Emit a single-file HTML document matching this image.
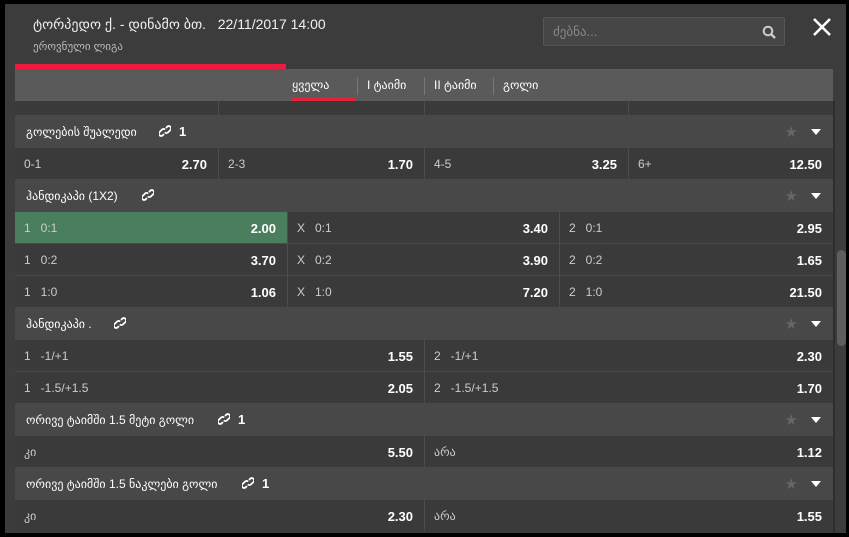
<!DOCTYPE html>
<html><head><meta charset="utf-8"><style>
*{margin:0;padding:0;box-sizing:border-box}
body{width:849px;height:537px;background:#000;overflow:hidden;font-family:"Liberation Sans","DejaVu Sans",sans-serif;color:#ddd;position:relative}
#panel{position:absolute;left:5px;top:4px;width:841px;height:529px;background:#3c3c3c;overflow:hidden}
.abs{position:absolute}
.title{left:28px;top:12px;font-size:14px;color:#f0f0f0}
.sub{left:28px;top:36px;font-size:11px;color:#bbb}
.search{left:538px;top:13px;width:242px;height:29px;border:1px solid #555;background:#464646;border-radius:2px;font-size:13px;color:#888;padding:6px 9px}
.red{left:10px;top:60px;width:271px;height:5px;background:#f0193f}
.tabs{left:10px;top:65px;width:818px;height:32px;background:#5a5a5a;font-size:12px;color:#fff}
.tab{position:absolute;top:9px}
.sep{position:absolute;top:8px;width:1px;height:18px;background:#777}
.rows{left:10px;top:97px;width:818px}
.r{position:relative;height:32px;border-top:1px solid #4b4b4b;background:#3a3a3a;font-size:12px}
.h{background:#484848;color:#fff;font-size:12px}
.h span.t{position:absolute;left:11px;top:9px}
.c{position:absolute;top:0;height:31px;border-left:1px solid #4d4d4d}
.c .l{position:absolute;left:9px;top:9px;color:#ccc}
.c .v{position:absolute;right:11px;top:9px;font-weight:bold;color:#fff;font-size:13px}
.g{background:#4a7e5e}
.star{position:absolute;right:35px;top:7px;color:#666;font-size:15px}
.tri{position:absolute;right:12px;top:13px;width:0;height:0;border-left:5px solid transparent;border-right:5px solid transparent;border-top:6px solid #fff}
.lnk{position:absolute;top:8px;font-size:13px;font-weight:bold}
.lnk svg{vertical-align:-1px;margin-right:8px}
</style></head><body>
<svg width="0" height="0" style="position:absolute"><defs><g id="ch"><path d="M5 9 L3.5 10.5 a2.3 2.3 0 0 1 -3.2 -3.2 L3 4.6 a2.3 2.3 0 0 1 3.2 0 M7 3 L8.5 1.5 a2.3 2.3 0 0 1 3.2 3.2 L9 7.4 a2.3 2.3 0 0 1 -3.2 0" stroke="#fff" stroke-width="1.8" fill="none"/></g></defs></svg>
<div id="panel">
<div class="abs title">ტორპედო ქ. - დინამო ბთ.&nbsp;&nbsp; 22/11/2017 14:00</div>
<div class="abs sub">ეროვნული ლიგა</div>
<div class="abs search">ძებნა...<svg style="position:absolute;right:8px;top:7px" width="14" height="14" viewBox="0 0 14 14"><circle cx="6" cy="6" r="4.3" stroke="#ccc" stroke-width="2" fill="none"/><path d="M9 9l4 4" stroke="#ccc" stroke-width="2.4"/></svg></div>
<svg class="abs" style="left:807px;top:13px" width="20" height="20" viewBox="0 0 20 20"><path d="M2 2L18 18M18 2L2 18" stroke="#fff" stroke-width="2.6"/></svg>
<div class="abs red"></div>
<div class="abs tabs">
<span class="tab" style="left:277px">ყველა</span>
<div class="abs" style="left:276px;top:29px;width:64px;height:3px;background:#e0243b"></div>
<div class="sep" style="left:342px"></div><span class="tab" style="left:352px">I ტაიმი</span>
<div class="sep" style="left:409px"></div><span class="tab" style="left:419px">II ტაიმი</span>
<div class="sep" style="left:478px"></div><span class="tab" style="left:488px">გოლი</span>
</div>
<div class="abs rows">
<div class="r" style="height:14px;border-top:none"><div class="c" style="left:203px;height:14px"></div><div class="c" style="left:409px;height:14px"></div><div class="c" style="left:613px;height:14px"></div></div>
<div class="r h"><span class="t">გოლების შუალედი</span><span class="lnk" style="left:144px"><svg width="12" height="12" viewBox="0 0 12 12"><use href="#ch"/></svg>1</span><span class="star">★</span><span class="tri"></span></div>
<div class="r"><div class="c" style="left:0;border:none;width:203px"><span class="l">0-1</span><span class="v">2.70</span></div><div class="c" style="left:203px;width:206px"><span class="l">2-3</span><span class="v">1.70</span></div><div class="c" style="left:409px;width:204px"><span class="l">4-5</span><span class="v">3.25</span></div><div class="c" style="left:613px;width:205px"><span class="l">6+</span><span class="v">12.50</span></div></div>
<div class="r h"><span class="t">ჰანდიკაპი (1X2)</span><span class="lnk" style="left:127px"><svg width="12" height="12" viewBox="0 0 12 12"><use href="#ch"/></svg></span><span class="star">★</span><span class="tri"></span></div>
<div class="r"><div class="c g" style="left:0;border:none;width:272px"><span class="l">1&nbsp;&nbsp; 0:1</span><span class="v">2.00</span></div><div class="c" style="left:272px;width:272px"><span class="l">X&nbsp;&nbsp; 0:1</span><span class="v">3.40</span></div><div class="c" style="left:544px;width:274px"><span class="l">2&nbsp;&nbsp; 0:1</span><span class="v">2.95</span></div></div>
<div class="r"><div class="c" style="left:0;border:none;width:272px"><span class="l">1&nbsp;&nbsp; 0:2</span><span class="v">3.70</span></div><div class="c" style="left:272px;width:272px"><span class="l">X&nbsp;&nbsp; 0:2</span><span class="v">3.90</span></div><div class="c" style="left:544px;width:274px"><span class="l">2&nbsp;&nbsp; 0:2</span><span class="v">1.65</span></div></div>
<div class="r"><div class="c" style="left:0;border:none;width:272px"><span class="l">1&nbsp;&nbsp; 1:0</span><span class="v">1.06</span></div><div class="c" style="left:272px;width:272px"><span class="l">X&nbsp;&nbsp; 1:0</span><span class="v">7.20</span></div><div class="c" style="left:544px;width:274px"><span class="l">2&nbsp;&nbsp; 1:0</span><span class="v">21.50</span></div></div>
<div class="r h"><span class="t">ჰანდიკაპი .</span><span class="lnk" style="left:99px"><svg width="12" height="12" viewBox="0 0 12 12"><use href="#ch"/></svg></span><span class="star">★</span><span class="tri"></span></div>
<div class="r"><div class="c" style="left:0;border:none;width:409px"><span class="l">1&nbsp;&nbsp; -1/+1</span><span class="v">1.55</span></div><div class="c" style="left:409px;width:409px"><span class="l">2&nbsp;&nbsp; -1/+1</span><span class="v">2.30</span></div></div>
<div class="r"><div class="c" style="left:0;border:none;width:409px"><span class="l">1&nbsp;&nbsp; -1.5/+1.5</span><span class="v">2.05</span></div><div class="c" style="left:409px;width:409px"><span class="l">2&nbsp;&nbsp; -1.5/+1.5</span><span class="v">1.70</span></div></div>
<div class="r h"><span class="t">ორივე ტაიმში 1.5 მეტი გოლი</span><span class="lnk" style="left:203px"><svg width="12" height="12" viewBox="0 0 12 12"><use href="#ch"/></svg>1</span><span class="star">★</span><span class="tri"></span></div>
<div class="r"><div class="c" style="left:0;border:none;width:409px"><span class="l">კი</span><span class="v">5.50</span></div><div class="c" style="left:409px;width:409px"><span class="l">არა</span><span class="v">1.12</span></div></div>
<div class="r h"><span class="t">ორივე ტაიმში 1.5 ნაკლები გოლი</span><span class="lnk" style="left:227px"><svg width="12" height="12" viewBox="0 0 12 12"><use href="#ch"/></svg>1</span><span class="star">★</span><span class="tri"></span></div>
<div class="r"><div class="c" style="left:0;border:none;width:409px"><span class="l">კი</span><span class="v">2.30</span></div><div class="c" style="left:409px;width:409px"><span class="l">არა</span><span class="v">1.55</span></div></div>
</div>
<div class="abs" style="left:828px;top:97px;width:2px;height:432px;background:#2e2e2e"></div>
<div class="abs" style="left:832px;top:246px;width:9px;height:96px;background:#5e5e5e;border-radius:5px"></div>
</div>
</body></html>
